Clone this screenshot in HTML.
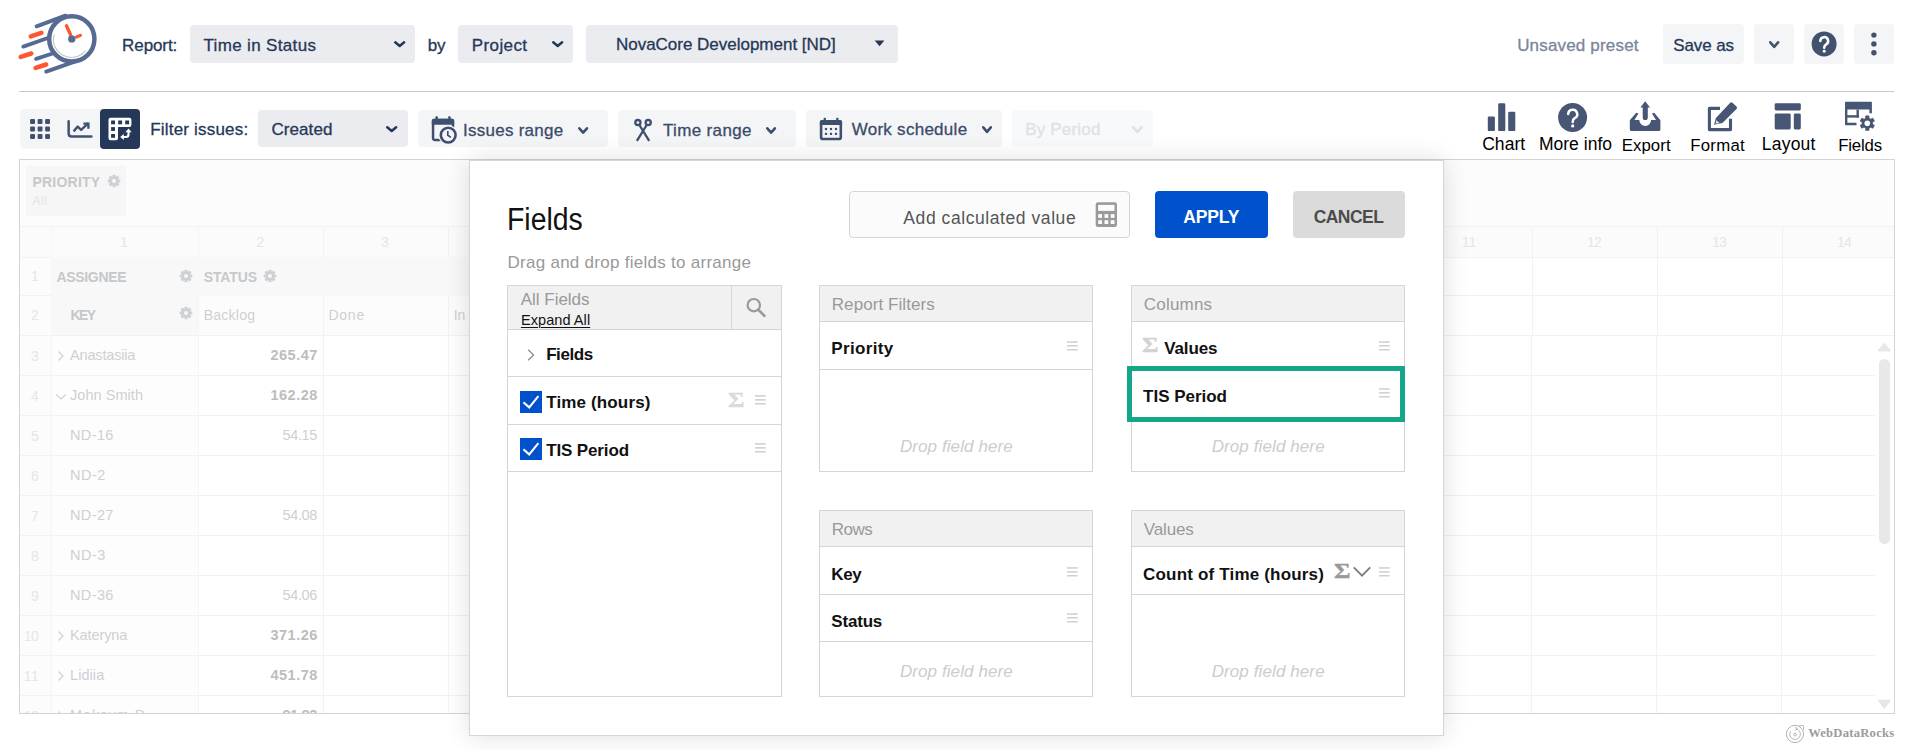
<!DOCTYPE html>
<html lang="en"><head><meta charset="utf-8"><title>Time in Status - Fields</title>
<style>
html,body{margin:0;padding:0;background:#fff;}
body{width:1913px;height:750px;overflow:hidden;position:relative;font-family:"Liberation Sans", sans-serif;}
.t{position:absolute;white-space:pre;}
div,svg,span{box-sizing:border-box;}
</style></head><body>
<svg style="position:absolute;left:10px;top:5px;" width="100" height="80" viewBox="0 0 100 80">
<g fill="none" stroke-linecap="round">
<g stroke="#566a93" stroke-width="3.9">
<line x1="26.6" y1="21.3" x2="55.4" y2="10.7"/>
<line x1="13.3" y1="41.6" x2="37.8" y2="33"/>
<line x1="26.1" y1="53.8" x2="42.6" y2="48.5"/>
<line x1="36.2" y1="66.6" x2="68.2" y2="55.4"/>
</g>
<g stroke="#ff5630" stroke-width="4.5">
<line x1="20.8" y1="31.4" x2="31.4" y2="27.9"/>
<line x1="10.7" y1="51.9" x2="21.3" y2="48.5"/>
<line x1="25.6" y1="62.9" x2="36.2" y2="59.5"/>
</g>
<circle cx="61.8" cy="33.9" r="22.6" fill="#fff" stroke="#566a93" stroke-width="4.5"/>
<path d="M44.1 29.6 A18 18 0 0 0 75.3 45.9" stroke="#c4c4c4" stroke-width="1.1"/>
<line x1="56.5" y1="20.8" x2="60.4" y2="29.5" stroke="#ff5630" stroke-width="3.4"/>
<line x1="66.6" y1="32" x2="70.4" y2="30.4" stroke="#ff5630" stroke-width="3.2"/>
</g>
<circle cx="61.8" cy="33.9" r="3.7" fill="#566a93"/>
</svg>
<span class="t" style='left:122.08px;top:36.51px;font-size:17px;line-height:17px;color:#253858;letter-spacing:-0.086px;-webkit-text-stroke:0.3px;'>Report:</span>
<div style="position:absolute;left:190px;top:25px;width:225px;height:38px;background:#ebecf0;border-radius:4px;"></div>
<span class="t" style='left:203.48px;top:36.51px;font-size:17px;line-height:17px;color:#253858;letter-spacing:0.346px;-webkit-text-stroke:0.3px;'>Time in Status</span>
<svg style="position:absolute;left:391.8px;top:38.8px;" width="15.399999999999977" height="10.200000000000003" viewBox="0 0 15.399999999999977 10.200000000000003"><path d="M3.25 3.25 L7.70 6.95 L12.15 3.25" fill="none" stroke="#253858" stroke-width="2.5" stroke-linecap="round" stroke-linejoin="round"/></svg>
<span class="t" style='left:427.78px;top:36.51px;font-size:17px;line-height:17px;color:#253858;letter-spacing:-0.137px;-webkit-text-stroke:0.3px;'>by</span>
<div style="position:absolute;left:458px;top:25px;width:115px;height:38px;background:#ebecf0;border-radius:4px;"></div>
<span class="t" style='left:471.68px;top:36.51px;font-size:17px;line-height:17px;color:#253858;letter-spacing:0.418px;-webkit-text-stroke:0.3px;'>Project</span>
<svg style="position:absolute;left:549.8px;top:38.8px;" width="15.400000000000091" height="10.200000000000003" viewBox="0 0 15.400000000000091 10.200000000000003"><path d="M3.25 3.25 L7.70 6.95 L12.15 3.25" fill="none" stroke="#253858" stroke-width="2.5" stroke-linecap="round" stroke-linejoin="round"/></svg>
<div style="position:absolute;left:586px;top:25px;width:312px;height:38px;background:#ebecf0;border-radius:4px;"></div>
<span class="t" style='left:615.98px;top:35.61px;font-size:17px;line-height:17px;color:#253858;letter-spacing:-0.014px;-webkit-text-stroke:0.3px;'>NovaCore Development [ND]</span>
<svg style="position:absolute;left:874px;top:40px;" width="12" height="7" viewBox="0 0 12 7"><path d="M0.7 0.4 L10.4 0.4 L5.55 6.2 Z" fill="#253858"/></svg>
<span class="t" style='left:1517.18px;top:36.51px;font-size:17px;line-height:17px;color:#7a869a;letter-spacing:0.173px;-webkit-text-stroke:0.3px;'>Unsaved preset</span>
<div style="position:absolute;left:1663px;top:24px;width:81px;height:40px;background:#f4f5f7;border-radius:4px;"></div>
<span class="t" style='left:1673.28px;top:36.51px;font-size:17px;line-height:17px;color:#253858;letter-spacing:-0.101px;-webkit-text-stroke:0.3px;'>Save as</span>
<div style="position:absolute;left:1754px;top:24px;width:40px;height:40px;background:#f4f5f7;border-radius:4px;"></div>
<svg style="position:absolute;left:1766.8px;top:39px;" width="14.400000000000091" height="11.100000000000001" viewBox="0 0 14.400000000000091 11.100000000000001"><path d="M3.30 3.30 L7.20 7.80 L11.10 3.30" fill="none" stroke="#42526e" stroke-width="2.6" stroke-linecap="round" stroke-linejoin="round"/></svg>
<div style="position:absolute;left:1804px;top:24px;width:40px;height:40px;background:#f4f5f7;border-radius:4px;"></div>
<svg style="position:absolute;left:1810px;top:30px;" width="28" height="28" viewBox="0 0 28 28"><circle cx="14.1" cy="13.9" r="12.5" fill="#42526e"/><g transform="translate(14.2 14) scale(0.87)"><g fill="none" stroke="#fff" stroke-width="2.9" stroke-linecap="round" stroke-linejoin="round"><path d="M-4.5 -3.6 A4.5 4.5 0 1 1 2.0 0.6 Q0 1.7 0 4.4"/></g><circle cx="0" cy="8.3" r="1.7" fill="#fff"/></g></svg>
<div style="position:absolute;left:1854px;top:24px;width:40px;height:40px;background:#f4f5f7;border-radius:4px;"></div>
<svg style="position:absolute;left:1868px;top:30px;" width="12" height="28" viewBox="0 0 12 28"><g fill="#42526e"><circle cx="5.9" cy="5.1" r="2.7"/><circle cx="5.9" cy="13.9" r="2.7"/><circle cx="5.9" cy="22.8" r="2.7"/></g></svg>
<div style="position:absolute;left:19px;top:91px;width:1875px;height:1px;background:#c9c9c9;border-radius:0px;"></div>
<div style="position:absolute;left:20px;top:109px;width:120px;height:40px;background:#f4f5f7;border-radius:4px;"></div>
<div style="position:absolute;left:100px;top:109px;width:40px;height:40px;background:#253858;border-radius:4px;"></div>
<svg style="position:absolute;left:29px;top:118px;" width="23" height="23" viewBox="0 0 23 23"><g fill="#42526e"><rect x="1.1" y="1.1" width="4.9" height="4.9" rx="1"/><rect x="8.6" y="1.1" width="4.9" height="4.9" rx="1"/><rect x="16.1" y="1.1" width="4.9" height="4.9" rx="1"/><rect x="1.1" y="8.6" width="4.9" height="4.9" rx="1"/><rect x="8.6" y="8.6" width="4.9" height="4.9" rx="1"/><rect x="16.1" y="8.6" width="4.9" height="4.9" rx="1"/><rect x="1.1" y="16.1" width="4.9" height="4.9" rx="1"/><rect x="8.6" y="16.1" width="4.9" height="4.9" rx="1"/><rect x="16.1" y="16.1" width="4.9" height="4.9" rx="1"/></g></svg>
<svg style="position:absolute;left:66px;top:118px;" width="28" height="22" viewBox="0 0 28 22"><g fill="none" stroke="#42526e" stroke-width="2.5" stroke-linejoin="round"><path d="M2.65 3.2 V15.4 Q2.65 18.4 5.65 18.4 H25.4" stroke-linecap="round"/><path d="M7.6 13.4 L11.7 8.6 L15.2 11.9 L22.3 5.2" stroke-linecap="butt" stroke-width="2.4"/><path d="M17.4 5.6 H22.4 V10.8" stroke-linecap="butt" stroke-linejoin="miter" stroke-width="2.4"/></g></svg>
<svg style="position:absolute;left:107px;top:117px;" width="26" height="25" viewBox="0 0 26 25"><path d="M3.5 0.7 H22.4 Q24.4 0.7 24.4 2.7 V7.9 Q24.4 9.9 22.4 9.9 H11 V21.3 Q11 23.3 9 23.3 H3.5 Q1.5 23.3 1.5 21.3 V2.7 Q1.5 0.7 3.5 0.7 Z" fill="#fff"/>
<g fill="#253858"><rect x="4.1" y="3.5" width="3.9" height="3.8"/><rect x="11.2" y="3.5" width="3.9" height="3.8"/><rect x="18.2" y="3.5" width="3.9" height="3.8"/><rect x="4.1" y="10.1" width="3.9" height="3.8"/><rect x="4.1" y="17.0" width="3.9" height="3.8"/></g>
<path d="M16 20 H19 Q21.5 20 21.5 17.5 V14.8" fill="none" stroke="#fff" stroke-width="2.1"/>
<path d="M13.2 20 L16.8 16.9 V23.1 Z M21.5 11.6 L18.3 15.3 H24.7 Z" fill="#fff"/></svg>
<span class="t" style='left:150.28px;top:120.61px;font-size:17px;line-height:17px;color:#253858;letter-spacing:0.193px;-webkit-text-stroke:0.3px;'>Filter issues:</span>
<div style="position:absolute;left:258px;top:110px;width:150px;height:37px;background:#ebecf0;border-radius:4px;"></div>
<span class="t" style='left:271.38px;top:120.61px;font-size:17px;line-height:17px;color:#253858;letter-spacing:0.091px;-webkit-text-stroke:0.3px;'>Created</span>
<svg style="position:absolute;left:384.3px;top:123.8px;" width="15.399999999999977" height="10.200000000000003" viewBox="0 0 15.399999999999977 10.200000000000003"><path d="M3.25 3.25 L7.70 6.95 L12.15 3.25" fill="none" stroke="#253858" stroke-width="2.5" stroke-linecap="round" stroke-linejoin="round"/></svg>
<div style="position:absolute;left:418px;top:110px;width:190px;height:37px;background:#f4f5f7;border-radius:4px;"></div>
<span class="t" style='left:463.08px;top:121.61px;font-size:17px;line-height:17px;color:#3b4b69;letter-spacing:0.244px;-webkit-text-stroke:0.3px;'>Issues range</span>
<svg style="position:absolute;left:575.9px;top:124.8px;" width="14.300000000000068" height="10.899999999999991" viewBox="0 0 14.300000000000068 10.899999999999991"><path d="M3.30 3.30 L7.15 7.60 L11.00 3.30" fill="none" stroke="#3e4f6d" stroke-width="2.6" stroke-linecap="round" stroke-linejoin="round"/></svg>
<div style="position:absolute;left:618px;top:110px;width:178px;height:37px;background:#f4f5f7;border-radius:4px;"></div>
<span class="t" style='left:662.98px;top:121.61px;font-size:17px;line-height:17px;color:#3b4b69;letter-spacing:0.353px;-webkit-text-stroke:0.3px;'>Time range</span>
<svg style="position:absolute;left:763.9px;top:124.8px;" width="14.200000000000045" height="10.899999999999991" viewBox="0 0 14.200000000000045 10.899999999999991"><path d="M3.30 3.30 L7.10 7.60 L10.90 3.30" fill="none" stroke="#3e4f6d" stroke-width="2.6" stroke-linecap="round" stroke-linejoin="round"/></svg>
<div style="position:absolute;left:806px;top:110px;width:196px;height:37px;background:#f4f5f7;border-radius:4px;"></div>
<span class="t" style='left:851.68px;top:120.61px;font-size:17px;line-height:17px;color:#3b4b69;letter-spacing:0.274px;-webkit-text-stroke:0.3px;'>Work schedule</span>
<svg style="position:absolute;left:979.9px;top:123.6px;" width="14.100000000000023" height="11.099999999999994" viewBox="0 0 14.100000000000023 11.099999999999994"><path d="M3.30 3.30 L7.05 7.80 L10.80 3.30" fill="none" stroke="#3e4f6d" stroke-width="2.6" stroke-linecap="round" stroke-linejoin="round"/></svg>
<div style="position:absolute;left:1012px;top:110px;width:141px;height:37px;background:#f8f9fa;border-radius:4px;"></div>
<span class="t" style='left:1025.18px;top:120.61px;font-size:17px;line-height:17px;color:#dfe1e6;letter-spacing:0.191px;-webkit-text-stroke:0.3px;'>By Period</span>
<svg style="position:absolute;left:1130.1px;top:123.6px;" width="14.700000000000045" height="11.099999999999994" viewBox="0 0 14.700000000000045 11.099999999999994"><path d="M3.30 3.30 L7.35 7.80 L11.40 3.30" fill="none" stroke="#dfe1e6" stroke-width="2.6" stroke-linecap="round" stroke-linejoin="round"/></svg>
<svg style="position:absolute;left:430px;top:115px;" width="30" height="30" viewBox="0 0 30 30"><rect x="3.05" y="4.95" width="19.9" height="20" rx="1.8" fill="none" stroke="#3f4f6e" stroke-width="2.5"/>
<path d="M1.8 5.6 Q1.8 3.7 3.7 3.7 H22.3 Q24.2 3.7 24.2 5.6 V9.8 H1.8 Z" fill="#3f4f6e"/>
<rect x="5.4" y="1.2" width="2.5" height="4" rx="0.8" fill="#3f4f6e"/><rect x="18.2" y="1.2" width="2.5" height="4" rx="0.8" fill="#3f4f6e"/>
<circle cx="18.2" cy="20.1" r="9.9" fill="#f4f5f7"/>
<circle cx="18.2" cy="20.1" r="7.4" fill="#f4f5f7" stroke="#3f4f6e" stroke-width="2.6"/>
<path d="M17.8 16 V20.2 L20.9 22.4" fill="none" stroke="#3f4f6e" stroke-width="1.7"/></svg>
<svg style="position:absolute;left:632px;top:117px;" width="22" height="26" viewBox="0 0 22 26"><g fill="none" stroke="#3f4f6e" stroke-width="2.3">
<circle cx="5.9" cy="5.6" r="2.6"/><circle cx="16.2" cy="5.6" r="2.6"/>
<path d="M7.4 8 L17.2 23.9 M14.7 8 L4.9 23.9"/></g></svg>
<svg style="position:absolute;left:818px;top:116px;" width="26" height="26" viewBox="0 0 26 26"><rect x="3.1" y="5.2" width="19.7" height="17.8" rx="1.8" fill="none" stroke="#3f4f6e" stroke-width="2.6"/>
<path d="M1.8 5.8 Q1.8 3.9 3.7 3.9 H22.2 Q24.1 3.9 24.1 5.8 V8.9 H1.8 Z" fill="#3f4f6e"/>
<rect x="5.6" y="1.7" width="2.3" height="4" rx="0.8" fill="#3f4f6e"/><rect x="18.2" y="1.7" width="2.3" height="4" rx="0.8" fill="#3f4f6e"/>
<g fill="#3f4f6e"><rect x="6.9" y="11.9" width="2.2" height="2.2"/><rect x="6.9" y="16.8" width="2.2" height="2.2"/><rect x="11.9" y="11.9" width="2.2" height="2.2"/><rect x="11.9" y="16.8" width="2.2" height="2.2"/><rect x="16.9" y="11.9" width="2.2" height="2.2"/><rect x="16.9" y="16.8" width="2.2" height="2.2"/></g></svg>
<svg style="position:absolute;left:1487px;top:102px;" width="30" height="30" viewBox="0 0 30 30"><g fill="#465674"><rect x="0.8" y="14.4" width="7.1" height="14.7" rx="1.2"/><rect x="11.2" y="1.2" width="7.1" height="27.9" rx="1.2"/><rect x="21.2" y="9.7" width="7.1" height="19.4" rx="1.2"/></g></svg>
<span class="t" style='left:1482.15px;top:135.89px;font-size:17.5px;line-height:17.5px;color:#000;letter-spacing:0.071px;'>Chart</span>
<svg style="position:absolute;left:1557px;top:102px;" width="32" height="32" viewBox="0 0 32 32"><circle cx="15.6" cy="15.5" r="14.5" fill="#465674"/><g transform="translate(15.7 15.6)"><g fill="none" stroke="#fff" stroke-width="2.5" stroke-linecap="round" stroke-linejoin="round"><path d="M-4.5 -3.6 A4.5 4.5 0 1 1 2.0 0.6 Q0 1.7 0 4.4"/></g><circle cx="0" cy="8.3" r="1.55" fill="#fff"/></g></svg>
<span class="t" style='left:1538.95px;top:135.89px;font-size:17.5px;line-height:17.5px;color:#000;letter-spacing:0.016px;'>More info</span>
<svg style="position:absolute;left:1629px;top:101px;" width="33" height="31" viewBox="0 0 33 31"><g fill="#465674"><path d="M16.2 0.3 L21 6.6 H18.8 V16.4 A2.55 2.55 0 0 1 13.7 16.4 V6.6 H11.4 Z"/>
<path d="M0.8 19.3 L7.2 11.7 L9.5 12.5 L5.4 19.1 H10.3 A5.9 5.9 0 0 0 22.1 19.1 H27 L22.9 12.5 L25.2 11.7 L31.4 19.3 V28.6 Q31.4 30.1 29.9 30.1 H2.3 Q0.8 30.1 0.8 28.6 Z"/></g></svg>
<span class="t" style='left:1621.69px;top:138.28px;font-size:16.8px;line-height:16.8px;color:#000;letter-spacing:0.079px;'>Export</span>
<svg style="position:absolute;left:1707px;top:101px;" width="32" height="31" viewBox="0 0 32 31"><g fill="none" stroke="#465674" stroke-width="3.1" stroke-linejoin="round"><path d="M13 7.4 H2.4 V28.6 H23.5 V17.8"/></g>
<g fill="#465674"><path d="M7 23.8 L8.9 17 L23 2 Q24.3 0.7 25.7 2 L29.5 5.4 Q30.8 6.7 29.5 8 L15.4 22 Z"/></g>
<path d="M9.3 19.2 L12.6 22 L8.6 22.8 Z" fill="#fff" opacity="0.85"/></svg>
<span class="t" style='left:1690.19px;top:138.28px;font-size:16.8px;line-height:16.8px;color:#000;letter-spacing:0.271px;'>Format</span>
<svg style="position:absolute;left:1774px;top:103px;" width="28" height="27" viewBox="0 0 28 27"><g fill="#465674"><rect x="0.7" y="0.2" width="26.1" height="7.3" rx="1.4"/><rect x="0.7" y="10.6" width="16" height="15.9" rx="1.4"/><rect x="19.8" y="10.6" width="7" height="15.9" rx="1.4"/></g></svg>
<span class="t" style='left:1761.75px;top:135.89px;font-size:17.5px;line-height:17.5px;color:#000;letter-spacing:0.227px;'>Layout</span>
<svg style="position:absolute;left:1845px;top:101px;" width="31" height="31" viewBox="0 0 31 31"><g fill="#465674"><path d="M0 1.6 Q0 0.8 0.8 0.8 H26.1 Q26.9 0.8 26.9 1.6 V12.3 H24.4 V8.6 H2.4 V21.8 H11.5 V24.3 H0.8 Q0 24.3 0 23.5 Z"/><rect x="0" y="14.2" width="13.9" height="2.4"/><rect x="11.5" y="8.6" width="2.4" height="8"/></g>
<g transform="translate(22.3 22.2)"><circle r="8.8" fill="#fff"/><g fill="#465674"><circle r="5.5"/><rect x="-2" y="-7.6" width="4" height="4" rx="0.6" transform="rotate(0)"/><rect x="-2" y="-7.6" width="4" height="4" rx="0.6" transform="rotate(60)"/><rect x="-2" y="-7.6" width="4" height="4" rx="0.6" transform="rotate(120)"/><rect x="-2" y="-7.6" width="4" height="4" rx="0.6" transform="rotate(180)"/><rect x="-2" y="-7.6" width="4" height="4" rx="0.6" transform="rotate(240)"/><rect x="-2" y="-7.6" width="4" height="4" rx="0.6" transform="rotate(300)"/></g><circle r="2.8" fill="#fff"/></g></svg>
<span class="t" style='left:1838.19px;top:138.28px;font-size:16.8px;line-height:16.8px;color:#000;letter-spacing:-0.171px;'>Fields</span>
<div style="position:absolute;left:19px;top:159px;width:1876px;height:555px;background:#fff;border-radius:0px;border:1px solid #d4d4d4;"></div>
<div style="position:absolute;left:20px;top:160px;width:1874px;height:66px;background:#fcfcfc;border-radius:0px;"></div>
<div style="position:absolute;left:26px;top:166px;width:100px;height:50px;background:#f6f6f6;border-radius:0px;"></div>
<div style="position:absolute;left:20px;top:226px;width:1874px;height:31px;background:#fbfbfb;border-radius:0px;"></div>
<div style="position:absolute;left:20px;top:257px;width:31px;height:456px;background:#fcfcfc;border-radius:0px;"></div>
<div style="position:absolute;left:51px;top:257px;width:1356px;height:38px;background:#f8f8f8;border-radius:0px;"></div>
<div style="position:absolute;left:51px;top:295px;width:147px;height:40px;background:#f8f8f8;border-radius:0px;"></div>
<div style="position:absolute;left:198px;top:295px;width:1209px;height:40px;background:#fcfcfc;border-radius:0px;"></div>
<div style="position:absolute;left:51px;top:335px;width:147px;height:378px;background:#fdfdfd;border-radius:0px;"></div>
<div style="position:absolute;left:20px;top:226px;width:1874px;height:1px;background:#f2f2f2;border-radius:0px;"></div>
<div style="position:absolute;left:20px;top:257px;width:1874px;height:1px;background:#f2f2f2;border-radius:0px;"></div>
<div style="position:absolute;left:20px;top:295px;width:1874px;height:1px;background:#f2f2f2;border-radius:0px;"></div>
<div style="position:absolute;left:20px;top:335px;width:1874px;height:1px;background:#f2f2f2;border-radius:0px;"></div>
<div style="position:absolute;left:20px;top:375px;width:1855px;height:1px;background:#f2f2f2;border-radius:0px;"></div>
<div style="position:absolute;left:20px;top:415px;width:1855px;height:1px;background:#f2f2f2;border-radius:0px;"></div>
<div style="position:absolute;left:20px;top:455px;width:1855px;height:1px;background:#f2f2f2;border-radius:0px;"></div>
<div style="position:absolute;left:20px;top:495px;width:1855px;height:1px;background:#f2f2f2;border-radius:0px;"></div>
<div style="position:absolute;left:20px;top:535px;width:1855px;height:1px;background:#f2f2f2;border-radius:0px;"></div>
<div style="position:absolute;left:20px;top:575px;width:1855px;height:1px;background:#f2f2f2;border-radius:0px;"></div>
<div style="position:absolute;left:20px;top:615px;width:1855px;height:1px;background:#f2f2f2;border-radius:0px;"></div>
<div style="position:absolute;left:20px;top:655px;width:1855px;height:1px;background:#f2f2f2;border-radius:0px;"></div>
<div style="position:absolute;left:20px;top:695px;width:1855px;height:1px;background:#f2f2f2;border-radius:0px;"></div>
<div style="position:absolute;left:51px;top:226px;width:1px;height:487px;background:#f5f5f5;border-radius:0px;"></div>
<div style="position:absolute;left:198px;top:226px;width:1px;height:487px;background:#f5f5f5;border-radius:0px;"></div>
<div style="position:absolute;left:323px;top:226px;width:1px;height:487px;background:#f2f2f2;border-radius:0px;"></div>
<div style="position:absolute;left:448px;top:226px;width:1px;height:487px;background:#f2f2f2;border-radius:0px;"></div>
<div style="position:absolute;left:1532px;top:226px;width:1px;height:109px;background:#f2f2f2;border-radius:0px;"></div>
<div style="position:absolute;left:1531px;top:335px;width:1px;height:378px;background:#f2f2f2;border-radius:0px;"></div>
<div style="position:absolute;left:1657px;top:226px;width:1px;height:109px;background:#f2f2f2;border-radius:0px;"></div>
<div style="position:absolute;left:1656px;top:335px;width:1px;height:378px;background:#f2f2f2;border-radius:0px;"></div>
<div style="position:absolute;left:1782px;top:226px;width:1px;height:109px;background:#f2f2f2;border-radius:0px;"></div>
<div style="position:absolute;left:1781px;top:335px;width:1px;height:378px;background:#f2f2f2;border-radius:0px;"></div>
<div style="position:absolute;left:51px;top:257px;width:1356px;height:39px;background:#f8f8f8;border-radius:0px;"></div>
<div style="position:absolute;left:51px;top:295px;width:147px;height:40px;background:#f8f8f8;border-radius:0px;"></div>
<span class="t" style='left:32.46px;top:174.55px;font-size:14px;line-height:14px;color:#c5c8cb;letter-spacing:0.231px;font-weight:700;'>PRIORITY</span>
<svg style="position:absolute;left:106.5px;top:173.8px;" width="14" height="14" viewBox="0 0 14 14"><g transform="translate(7 7)"><g fill="#cdd1d5"><circle r="4.6"/><rect x="-1.5" y="-6.3" width="3" height="3.2" rx="0.5" transform="rotate(0)"/><rect x="-1.5" y="-6.3" width="3" height="3.2" rx="0.5" transform="rotate(45)"/><rect x="-1.5" y="-6.3" width="3" height="3.2" rx="0.5" transform="rotate(90)"/><rect x="-1.5" y="-6.3" width="3" height="3.2" rx="0.5" transform="rotate(135)"/><rect x="-1.5" y="-6.3" width="3" height="3.2" rx="0.5" transform="rotate(180)"/><rect x="-1.5" y="-6.3" width="3" height="3.2" rx="0.5" transform="rotate(225)"/><rect x="-1.5" y="-6.3" width="3" height="3.2" rx="0.5" transform="rotate(270)"/><rect x="-1.5" y="-6.3" width="3" height="3.2" rx="0.5" transform="rotate(315)"/></g><circle r="2.1" fill="#f8f8f8"/></g></svg>
<span class="t" style='left:32.58px;top:195.44px;font-size:12px;line-height:12px;color:#e4e5e7;letter-spacing:0.504px;'>All</span>
<span class="t" style='left:120.06px;top:234.75px;font-size:14px;line-height:14px;color:#e5e6e8;letter-spacing:-0.053px;'>1</span>
<span class="t" style='left:256.46px;top:234.75px;font-size:14px;line-height:14px;color:#e5e6e8;letter-spacing:-0.053px;'>2</span>
<span class="t" style='left:381.06px;top:234.75px;font-size:14px;line-height:14px;color:#e5e6e8;letter-spacing:-0.053px;'>3</span>
<span class="t" style='left:1586.96px;top:234.75px;font-size:14px;line-height:14px;color:#e5e6e8;letter-spacing:-0.634px;'>12</span>
<span class="t" style='left:1711.96px;top:234.75px;font-size:14px;line-height:14px;color:#e5e6e8;letter-spacing:-0.634px;'>13</span>
<span class="t" style='left:1836.96px;top:234.75px;font-size:14px;line-height:14px;color:#e5e6e8;letter-spacing:-0.634px;'>14</span>
<span class="t" style='left:1461.66px;top:234.75px;font-size:14px;line-height:14px;color:#e5e6e8;letter-spacing:-0.003px;'>11</span>
<span class="t" style='left:31.06px;top:269.25px;font-size:14px;line-height:14px;color:#e5e6e8;letter-spacing:-0.053px;'>1</span>
<span class="t" style='left:31.06px;top:307.75px;font-size:14px;line-height:14px;color:#e5e6e8;letter-spacing:-0.053px;'>2</span>
<span class="t" style='left:31.06px;top:348.55px;font-size:14px;line-height:14px;color:#e5e6e8;letter-spacing:-0.053px;'>3</span>
<span class="t" style='left:31.06px;top:388.55px;font-size:14px;line-height:14px;color:#e5e6e8;letter-spacing:-0.053px;'>4</span>
<span class="t" style='left:31.06px;top:428.55px;font-size:14px;line-height:14px;color:#e5e6e8;letter-spacing:-0.053px;'>5</span>
<span class="t" style='left:31.06px;top:468.55px;font-size:14px;line-height:14px;color:#e5e6e8;letter-spacing:-0.053px;'>6</span>
<span class="t" style='left:31.06px;top:508.55px;font-size:14px;line-height:14px;color:#e5e6e8;letter-spacing:-0.053px;'>7</span>
<span class="t" style='left:31.06px;top:548.55px;font-size:14px;line-height:14px;color:#e5e6e8;letter-spacing:-0.053px;'>8</span>
<span class="t" style='left:31.06px;top:588.55px;font-size:14px;line-height:14px;color:#e5e6e8;letter-spacing:-0.053px;'>9</span>
<span class="t" style='left:23.86px;top:628.55px;font-size:14px;line-height:14px;color:#e5e6e8;letter-spacing:-0.634px;'>10</span>
<span class="t" style='left:23.86px;top:668.55px;font-size:14px;line-height:14px;color:#e5e6e8;letter-spacing:0.397px;'>11</span>
<span class="t" style='left:56.46px;top:270.35px;font-size:14px;line-height:14px;color:#c5c8cb;letter-spacing:-0.316px;font-weight:700;'>ASSIGNEE</span>
<svg style="position:absolute;left:179px;top:269px;" width="14" height="14" viewBox="0 0 14 14"><g transform="translate(7 7)"><g fill="#cdd1d5"><circle r="4.6"/><rect x="-1.5" y="-6.3" width="3" height="3.2" rx="0.5" transform="rotate(0)"/><rect x="-1.5" y="-6.3" width="3" height="3.2" rx="0.5" transform="rotate(45)"/><rect x="-1.5" y="-6.3" width="3" height="3.2" rx="0.5" transform="rotate(90)"/><rect x="-1.5" y="-6.3" width="3" height="3.2" rx="0.5" transform="rotate(135)"/><rect x="-1.5" y="-6.3" width="3" height="3.2" rx="0.5" transform="rotate(180)"/><rect x="-1.5" y="-6.3" width="3" height="3.2" rx="0.5" transform="rotate(225)"/><rect x="-1.5" y="-6.3" width="3" height="3.2" rx="0.5" transform="rotate(270)"/><rect x="-1.5" y="-6.3" width="3" height="3.2" rx="0.5" transform="rotate(315)"/></g><circle r="2.1" fill="#f8f8f8"/></g></svg>
<span class="t" style='left:203.66px;top:270.35px;font-size:14px;line-height:14px;color:#c5c8cb;letter-spacing:-0.116px;font-weight:700;'>STATUS</span>
<svg style="position:absolute;left:262.6px;top:269px;" width="14" height="14" viewBox="0 0 14 14"><g transform="translate(7 7)"><g fill="#cdd1d5"><circle r="4.6"/><rect x="-1.5" y="-6.3" width="3" height="3.2" rx="0.5" transform="rotate(0)"/><rect x="-1.5" y="-6.3" width="3" height="3.2" rx="0.5" transform="rotate(45)"/><rect x="-1.5" y="-6.3" width="3" height="3.2" rx="0.5" transform="rotate(90)"/><rect x="-1.5" y="-6.3" width="3" height="3.2" rx="0.5" transform="rotate(135)"/><rect x="-1.5" y="-6.3" width="3" height="3.2" rx="0.5" transform="rotate(180)"/><rect x="-1.5" y="-6.3" width="3" height="3.2" rx="0.5" transform="rotate(225)"/><rect x="-1.5" y="-6.3" width="3" height="3.2" rx="0.5" transform="rotate(270)"/><rect x="-1.5" y="-6.3" width="3" height="3.2" rx="0.5" transform="rotate(315)"/></g><circle r="2.1" fill="#f8f8f8"/></g></svg>
<span class="t" style='left:70.46px;top:308.35px;font-size:14px;line-height:14px;color:#c5c8cb;letter-spacing:-1.526px;font-weight:700;'>KEY</span>
<svg style="position:absolute;left:179px;top:306px;" width="14" height="14" viewBox="0 0 14 14"><g transform="translate(7 7)"><g fill="#cdd1d5"><circle r="4.6"/><rect x="-1.5" y="-6.3" width="3" height="3.2" rx="0.5" transform="rotate(0)"/><rect x="-1.5" y="-6.3" width="3" height="3.2" rx="0.5" transform="rotate(45)"/><rect x="-1.5" y="-6.3" width="3" height="3.2" rx="0.5" transform="rotate(90)"/><rect x="-1.5" y="-6.3" width="3" height="3.2" rx="0.5" transform="rotate(135)"/><rect x="-1.5" y="-6.3" width="3" height="3.2" rx="0.5" transform="rotate(180)"/><rect x="-1.5" y="-6.3" width="3" height="3.2" rx="0.5" transform="rotate(225)"/><rect x="-1.5" y="-6.3" width="3" height="3.2" rx="0.5" transform="rotate(270)"/><rect x="-1.5" y="-6.3" width="3" height="3.2" rx="0.5" transform="rotate(315)"/></g><circle r="2.1" fill="#f8f8f8"/></g></svg>
<span class="t" style='left:203.66px;top:308.35px;font-size:14px;line-height:14px;color:#cdd0d3;letter-spacing:0.255px;'>Backlog</span>
<span class="t" style='left:328.46px;top:308.35px;font-size:14px;line-height:14px;color:#cdd0d3;letter-spacing:0.758px;'>Done</span>
<span class="t" style='left:453.66px;top:308.35px;font-size:14px;line-height:14px;color:#cdd0d3;letter-spacing:-0.144px;'>In</span>
<span class="t" style='left:70.03px;top:348.13px;font-size:14.5px;line-height:14.5px;color:#cdd0d3;letter-spacing:-0.168px;'>Anastasiia</span>
<svg style="position:absolute;left:57px;top:350.3px;" width="8" height="12" viewBox="0 0 8 12"><path d="M1.5 1.5 L6 6 L1.5 10.5" fill="none" stroke="#cfcfcf" stroke-width="1.1"/></svg>
<span class="t" style='left:270.43px;top:348.13px;font-size:14.5px;line-height:14.5px;color:#bdbdbd;letter-spacing:0.527px;font-weight:700;'>265.47</span>
<span class="t" style='left:70.03px;top:388.13px;font-size:14.5px;line-height:14.5px;color:#cdd0d3;letter-spacing:0.049px;'>John Smith</span>
<svg style="position:absolute;left:55px;top:392.8px;" width="12" height="8" viewBox="0 0 12 8"><path d="M1.2 1.5 L6 6 L10.8 1.5" fill="none" stroke="#cfcfcf" stroke-width="1.1"/></svg>
<span class="t" style='left:270.43px;top:388.13px;font-size:14.5px;line-height:14.5px;color:#bdbdbd;letter-spacing:0.527px;font-weight:700;'>162.28</span>
<span class="t" style='left:70.03px;top:428.13px;font-size:14.5px;line-height:14.5px;color:#cdd0d3;letter-spacing:0.371px;'>ND-16</span>
<span class="t" style='left:282.43px;top:428.13px;font-size:14.5px;line-height:14.5px;color:#cdd0d3;letter-spacing:-0.326px;'>54.15</span>
<span class="t" style='left:70.03px;top:468.13px;font-size:14.5px;line-height:14.5px;color:#cdd0d3;letter-spacing:0.516px;'>ND-2</span>
<span class="t" style='left:70.03px;top:508.13px;font-size:14.5px;line-height:14.5px;color:#cdd0d3;letter-spacing:0.371px;'>ND-27</span>
<span class="t" style='left:282.43px;top:508.13px;font-size:14.5px;line-height:14.5px;color:#cdd0d3;letter-spacing:-0.326px;'>54.08</span>
<span class="t" style='left:70.03px;top:548.13px;font-size:14.5px;line-height:14.5px;color:#cdd0d3;letter-spacing:0.516px;'>ND-3</span>
<span class="t" style='left:70.03px;top:588.13px;font-size:14.5px;line-height:14.5px;color:#cdd0d3;letter-spacing:0.371px;'>ND-36</span>
<span class="t" style='left:282.43px;top:588.13px;font-size:14.5px;line-height:14.5px;color:#cdd0d3;letter-spacing:-0.326px;'>54.06</span>
<span class="t" style='left:70.03px;top:628.13px;font-size:14.5px;line-height:14.5px;color:#cdd0d3;letter-spacing:-0.094px;'>Kateryna</span>
<svg style="position:absolute;left:57px;top:630.3px;" width="8" height="12" viewBox="0 0 8 12"><path d="M1.5 1.5 L6 6 L1.5 10.5" fill="none" stroke="#cfcfcf" stroke-width="1.1"/></svg>
<span class="t" style='left:270.43px;top:628.13px;font-size:14.5px;line-height:14.5px;color:#bdbdbd;letter-spacing:0.527px;font-weight:700;'>371.26</span>
<span class="t" style='left:70.03px;top:668.13px;font-size:14.5px;line-height:14.5px;color:#cdd0d3;letter-spacing:0.067px;'>Lidiia</span>
<svg style="position:absolute;left:57px;top:670.3px;" width="8" height="12" viewBox="0 0 8 12"><path d="M1.5 1.5 L6 6 L1.5 10.5" fill="none" stroke="#cfcfcf" stroke-width="1.1"/></svg>
<span class="t" style='left:270.43px;top:668.13px;font-size:14.5px;line-height:14.5px;color:#bdbdbd;letter-spacing:0.527px;font-weight:700;'>451.78</span>
<div style="position:absolute;left:20px;top:696px;width:1855px;height:17px;overflow:hidden">
<span class="t" style='left:3.86px;top:12.55px;font-size:14px;line-height:14px;color:#e5e6e8;letter-spacing:-0.634px;'>12</span>
<span class="t" style='left:50.03px;top:12.13px;font-size:14.5px;line-height:14.5px;color:#cdd0d3;letter-spacing:0.961px;'>Maksym D.</span>
<span class="t" style='left:262.43px;top:12.13px;font-size:14.5px;line-height:14.5px;color:#bdbdbd;letter-spacing:-0.326px;font-weight:700;'>91.83</span>
<svg style="position:absolute;left:37px;top:14.299999999999955px;" width="8" height="12" viewBox="0 0 8 12"><path d="M1.5 1.5 L6 6 L1.5 10.5" fill="none" stroke="#cfcfcf" stroke-width="1.1"/></svg>
</div>
<svg style="position:absolute;left:1877px;top:342px;" width="15" height="11" viewBox="0 0 15 11"><path d="M7.3 1.8 L12.8 8.6 H1.8 Z" fill="#e7e7e7" stroke="#e7e7e7" stroke-width="1.6" stroke-linejoin="round"/></svg>
<div style="position:absolute;left:1879px;top:359px;width:11px;height:185px;background:#e8e8e8;border-radius:5.5px;"></div>
<svg style="position:absolute;left:1877px;top:697px;" width="15" height="13" viewBox="0 0 15 13"><path d="M7.3 10.9 L12.8 3.6 H1.8 Z" fill="#e7e7e7" stroke="#e7e7e7" stroke-width="1.6" stroke-linejoin="round"/></svg>
<svg style="position:absolute;left:1785px;top:724px;" width="20" height="20" viewBox="0 0 20 20"><g fill="none" stroke="#b5b5b5" stroke-width="1"><circle cx="10" cy="10" r="8.6"/><path d="M5.6 7.2 A5.3 5.3 0 1 0 10.6 4.8"/><path d="M14 1.6 H18.6 V6.2" stroke-width="0.9"/><circle cx="10" cy="10.6" r="1.4"/><path d="M10.4 2.9 L12.4 4.9 L10.2 6.4"/></g></svg>
<span class="t" style='left:1808.14px;top:727.29px;font-size:12.6px;line-height:12.6px;color:#9b9b9b;letter-spacing:0.249px;font-weight:700;font-family:"Liberation Serif", serif;'>WebDataRocks</span>
<div style="position:absolute;left:469px;top:160px;width:975px;height:576px;background:#fff;border-radius:0px;border:1px solid #d5d5d5;box-shadow:0 0 24px rgba(0,0,0,0.135);"></div>
<span class="t" style='left:507.10px;top:203.70px;font-size:30.6px;line-height:30.6px;color:#111;letter-spacing:0.000px;transform:scaleX(0.928);transform-origin:0 0;'>Fields</span>
<span class="t" style='left:507.48px;top:253.51px;font-size:17px;line-height:17px;color:#999;letter-spacing:0.274px;'>Drag and drop fields to arrange</span>
<div style="position:absolute;left:849px;top:191px;width:281px;height:47px;background:#fbfbfb;border-radius:4px;border:1px solid #d5d5d5;"></div>
<span class="t" style='left:903.35px;top:209.99px;font-size:17.5px;line-height:17.5px;color:#555;letter-spacing:0.567px;'>Add calculated value</span>
<svg style="position:absolute;left:1095px;top:202px;" width="23" height="26" viewBox="0 0 23 26"><rect x="0.7" y="0.2" width="21.3" height="24.7" rx="2.2" fill="#9a9a9a"/>
<g fill="#fbfbfb"><rect x="3.1" y="2.9" width="16.4" height="6"/><rect x="3.2" y="12.1" width="3.8" height="3.8"/><rect x="3.2" y="18.2" width="3.8" height="3.8"/><rect x="9.5" y="12.1" width="3.8" height="3.8"/><rect x="9.5" y="18.2" width="3.8" height="3.8"/><rect x="15.7" y="12.1" width="3.8" height="3.8"/><rect x="15.7" y="18.2" width="3.8" height="3.8"/></g></svg>
<div style="position:absolute;left:1155px;top:191px;width:113px;height:47px;background:#0052cc;border-radius:4px;"></div>
<span class="t" style='left:1183.35px;top:209.09px;font-size:17.5px;line-height:17.5px;color:#fff;letter-spacing:-0.193px;font-weight:700;'>APPLY</span>
<div style="position:absolute;left:1293px;top:191px;width:112px;height:47px;background:#dbdbdb;border-radius:4px;"></div>
<span class="t" style='left:1313.65px;top:209.09px;font-size:17.5px;line-height:17.5px;color:#4b4b4b;letter-spacing:-0.528px;font-weight:700;'>CANCEL</span>
<div style="position:absolute;left:507px;top:285px;width:275px;height:412px;background:#fff;border-radius:0px;border:1px solid #d5d5d5;"></div>
<div style="position:absolute;left:508px;top:286px;width:273px;height:43px;background:#f1f1f1;border-radius:0px;"></div>
<div style="position:absolute;left:508px;top:329px;width:273px;height:1px;background:#d5d5d5;border-radius:0px;"></div>
<div style="position:absolute;left:731px;top:286px;width:1px;height:43px;background:#d5d5d5;border-radius:0px;"></div>
<span class="t" style='left:520.78px;top:290.51px;font-size:17px;line-height:17px;color:#999;letter-spacing:-0.026px;'>All Fields</span>
<span class="t" style='left:520.93px;top:312.93px;font-size:14.5px;line-height:14.5px;color:#111;letter-spacing:0.073px;text-decoration:underline;text-underline-offset:1.5px;text-decoration-thickness:1px;'>Expand All</span>
<svg style="position:absolute;left:745px;top:296.6px;" width="23" height="22" viewBox="0 0 23 22"><g fill="none" stroke="#999"><circle cx="8.8" cy="8.2" r="6.2" stroke-width="2.2"/><path d="M13.2 12.6 L20.2 19.6" stroke-width="2.7" stroke-linecap="butt"/></g></svg>
<div style="position:absolute;left:508px;top:376px;width:273px;height:1px;background:#d5d5d5;border-radius:0px;"></div>
<div style="position:absolute;left:508px;top:424px;width:273px;height:1px;background:#d5d5d5;border-radius:0px;"></div>
<div style="position:absolute;left:508px;top:471px;width:273px;height:1px;background:#d5d5d5;border-radius:0px;"></div>
<svg style="position:absolute;left:526px;top:348px;" width="10" height="14" viewBox="0 0 10 14"><path d="M2.2 1.8 L7.6 7 L2.2 12.2" fill="none" stroke="#888" stroke-width="1.2"/></svg>
<span class="t" style='left:546.18px;top:346.01px;font-size:17px;line-height:17px;color:#111;letter-spacing:-0.439px;font-weight:700;'>Fields</span>
<div style="position:absolute;left:520px;top:391px;width:22px;height:22px;background:#0052cc;border-radius:0px;"></div><svg style="position:absolute;left:520px;top:391px;" width="22" height="22" viewBox="0 0 22 22"><path d="M3.4 11.2 L9.2 16.4 L18.4 5.2" fill="none" stroke="#fff" stroke-width="2.1"/></svg>
<span class="t" style='left:546.18px;top:394.01px;font-size:17px;line-height:17px;color:#111;letter-spacing:0.145px;font-weight:700;'>Time (hours)</span>
<span class="t" style='left:728.10px;top:390.20px;font-size:20px;line-height:20px;color:#dadada;letter-spacing:1.962px;font-weight:700;font-family:"Liberation Serif", serif;transform:scaleX(1.26);transform-origin:0 0;-webkit-text-stroke:0.4px;'>Σ</span>
<svg style="position:absolute;left:755.2px;top:395.2px;" width="11" height="10" viewBox="0 0 11 10"><g fill="#cfcfcf"><rect x="0" y="0.2" width="10.7" height="1.5"/><rect x="0" y="4.1" width="10.7" height="1.5"/><rect x="0" y="8" width="10.7" height="1.5"/></g></svg>
<div style="position:absolute;left:520px;top:438.3px;width:22px;height:22.0px;background:#0052cc;border-radius:0px;"></div><svg style="position:absolute;left:520px;top:438.3px;" width="22" height="22" viewBox="0 0 22 22"><path d="M3.4 11.2 L9.2 16.4 L18.4 5.2" fill="none" stroke="#fff" stroke-width="2.1"/></svg>
<span class="t" style='left:546.18px;top:441.51px;font-size:17px;line-height:17px;color:#111;letter-spacing:-0.127px;font-weight:700;'>TIS Period</span>
<svg style="position:absolute;left:755.2px;top:442.8px;" width="11" height="10" viewBox="0 0 11 10"><g fill="#cfcfcf"><rect x="0" y="0.2" width="10.7" height="1.5"/><rect x="0" y="4.1" width="10.7" height="1.5"/><rect x="0" y="8" width="10.7" height="1.5"/></g></svg>
<div style="position:absolute;left:819px;top:285px;width:274px;height:187px;background:#fff;border-radius:0px;border:1px solid #d5d5d5;"></div><div style="position:absolute;left:820px;top:286px;width:272px;height:35px;background:#f1f1f1;border-radius:0px;"></div><div style="position:absolute;left:820px;top:321px;width:272px;height:1px;background:#d5d5d5;border-radius:0px;"></div><span class="t" style='left:831.78px;top:296.41px;font-size:17px;line-height:17px;color:#999;letter-spacing:0.077px;'>Report Filters</span>
<span class="t" style='left:831.28px;top:340.31px;font-size:17px;line-height:17px;color:#111;letter-spacing:0.357px;font-weight:700;'>Priority</span>
<svg style="position:absolute;left:1067px;top:341.3px;" width="11" height="10" viewBox="0 0 11 10"><g fill="#cfcfcf"><rect x="0" y="0.2" width="10.7" height="1.5"/><rect x="0" y="4.1" width="10.7" height="1.5"/><rect x="0" y="8" width="10.7" height="1.5"/></g></svg>
<div style="position:absolute;left:820px;top:369px;width:272px;height:1px;background:#d5d5d5;border-radius:0px;"></div>
<span class="t" style='left:899.88px;top:437.71px;font-size:17px;line-height:17px;color:#ccc;letter-spacing:0.094px;font-style:italic;'>Drop field here</span>
<div style="position:absolute;left:1131px;top:285px;width:274px;height:187px;background:#fff;border-radius:0px;border:1px solid #d5d5d5;"></div><div style="position:absolute;left:1132px;top:286px;width:272px;height:35px;background:#f1f1f1;border-radius:0px;"></div><div style="position:absolute;left:1132px;top:321px;width:272px;height:1px;background:#d5d5d5;border-radius:0px;"></div><span class="t" style='left:1143.78px;top:296.41px;font-size:17px;line-height:17px;color:#999;letter-spacing:0.206px;'>Columns</span>
<span class="t" style='left:1142.00px;top:335.00px;font-size:20px;line-height:20px;color:#d2d2d2;letter-spacing:2.162px;font-weight:700;font-family:"Liberation Serif", serif;transform:scaleX(1.26);transform-origin:0 0;-webkit-text-stroke:0.4px;'>Σ</span>
<span class="t" style='left:1164.18px;top:340.31px;font-size:17px;line-height:17px;color:#111;letter-spacing:-0.109px;font-weight:700;'>Values</span>
<svg style="position:absolute;left:1378.8px;top:341.3px;" width="11" height="10" viewBox="0 0 11 10"><g fill="#cfcfcf"><rect x="0" y="0.2" width="10.7" height="1.5"/><rect x="0" y="4.1" width="10.7" height="1.5"/><rect x="0" y="8" width="10.7" height="1.5"/></g></svg>
<div style="position:absolute;left:1127px;top:366px;width:278px;height:56px;background:#fff;border-radius:0px;border:5px solid #13a689;"></div>
<span class="t" style='left:1143.08px;top:387.51px;font-size:17px;line-height:17px;color:#111;letter-spacing:-0.027px;font-weight:700;'>TIS Period</span>
<svg style="position:absolute;left:1378.8px;top:388.2px;" width="11" height="10" viewBox="0 0 11 10"><g fill="#cfcfcf"><rect x="0" y="0.2" width="10.7" height="1.5"/><rect x="0" y="4.1" width="10.7" height="1.5"/><rect x="0" y="8" width="10.7" height="1.5"/></g></svg>
<span class="t" style='left:1211.68px;top:437.71px;font-size:17px;line-height:17px;color:#ccc;letter-spacing:0.101px;font-style:italic;'>Drop field here</span>
<div style="position:absolute;left:819px;top:510px;width:274px;height:187px;background:#fff;border-radius:0px;border:1px solid #d5d5d5;"></div><div style="position:absolute;left:820px;top:511px;width:272px;height:35px;background:#f1f1f1;border-radius:0px;"></div><div style="position:absolute;left:820px;top:546px;width:272px;height:1px;background:#d5d5d5;border-radius:0px;"></div><span class="t" style='left:831.78px;top:520.61px;font-size:17px;line-height:17px;color:#999;letter-spacing:-0.495px;'>Rows</span>
<span class="t" style='left:831.28px;top:565.61px;font-size:17px;line-height:17px;color:#111;letter-spacing:-0.328px;font-weight:700;'>Key</span>
<svg style="position:absolute;left:1067px;top:566.5px;" width="11" height="10" viewBox="0 0 11 10"><g fill="#cfcfcf"><rect x="0" y="0.2" width="10.7" height="1.5"/><rect x="0" y="4.1" width="10.7" height="1.5"/><rect x="0" y="8" width="10.7" height="1.5"/></g></svg>
<div style="position:absolute;left:820px;top:594px;width:272px;height:1px;background:#d5d5d5;border-radius:0px;"></div>
<span class="t" style='left:831.28px;top:612.51px;font-size:17px;line-height:17px;color:#111;letter-spacing:-0.187px;font-weight:700;'>Status</span>
<svg style="position:absolute;left:1067px;top:613.4px;" width="11" height="10" viewBox="0 0 11 10"><g fill="#cfcfcf"><rect x="0" y="0.2" width="10.7" height="1.5"/><rect x="0" y="4.1" width="10.7" height="1.5"/><rect x="0" y="8" width="10.7" height="1.5"/></g></svg>
<div style="position:absolute;left:820px;top:641px;width:272px;height:1px;background:#d5d5d5;border-radius:0px;"></div>
<span class="t" style='left:899.88px;top:662.61px;font-size:17px;line-height:17px;color:#ccc;letter-spacing:0.094px;font-style:italic;'>Drop field here</span>
<div style="position:absolute;left:1131px;top:510px;width:274px;height:187px;background:#fff;border-radius:0px;border:1px solid #d5d5d5;"></div><div style="position:absolute;left:1132px;top:511px;width:272px;height:35px;background:#f1f1f1;border-radius:0px;"></div><div style="position:absolute;left:1132px;top:546px;width:272px;height:1px;background:#d5d5d5;border-radius:0px;"></div><span class="t" style='left:1143.78px;top:520.61px;font-size:17px;line-height:17px;color:#999;letter-spacing:-0.137px;'>Values</span>
<span class="t" style='left:1143.08px;top:565.61px;font-size:17px;line-height:17px;color:#111;letter-spacing:0.180px;font-weight:700;'>Count of Time (hours)</span>
<span class="t" style='left:1334.40px;top:561.00px;font-size:20px;line-height:20px;color:#999;letter-spacing:1.762px;font-weight:700;font-family:"Liberation Serif", serif;transform:scaleX(1.26);transform-origin:0 0;-webkit-text-stroke:0.4px;'>Σ</span>
<svg style="position:absolute;left:1352px;top:565px;" width="20" height="14" viewBox="0 0 20 14"><path d="M1.8 2.4 L10 10.6 L18.2 2.4" fill="none" stroke="#7c7c7c" stroke-width="1.9"/></svg>
<svg style="position:absolute;left:1378.8px;top:566.5px;" width="11" height="10" viewBox="0 0 11 10"><g fill="#cfcfcf"><rect x="0" y="0.2" width="10.7" height="1.5"/><rect x="0" y="4.1" width="10.7" height="1.5"/><rect x="0" y="8" width="10.7" height="1.5"/></g></svg>
<div style="position:absolute;left:1132px;top:594px;width:272px;height:1px;background:#d5d5d5;border-radius:0px;"></div>
<span class="t" style='left:1211.68px;top:662.61px;font-size:17px;line-height:17px;color:#ccc;letter-spacing:0.101px;font-style:italic;'>Drop field here</span>
</body></html>
